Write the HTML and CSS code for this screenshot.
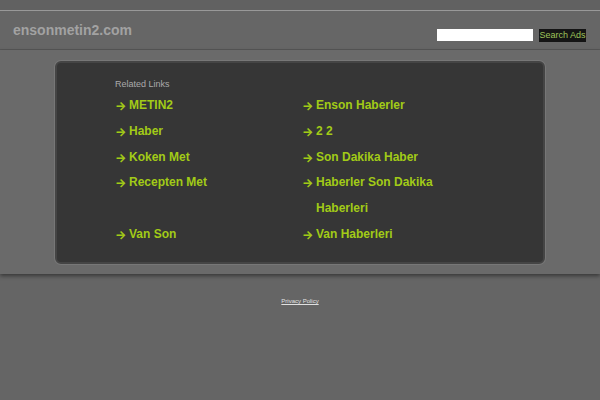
FILE: index.html
```html
<!DOCTYPE html>
<html>
<head>
<meta charset="utf-8">
<link rel="stylesheet" href="styles.css">
</head>
<body>
<div class="topbar"></div>
<div class="header">
  <div class="domain">ensonmetin2.com</div>
  <form class="search">
    <input class="search-input" type="text">
    <button class="search-btn" type="button">Search Ads</button>
  </form>
</div>
<div class="main">
  <div class="panel">
    <div class="related">Related Links</div>
    <div class="links">
      <a class="link"><span class="arrow">&#x2192;</span><span class="label">METIN2</span></a>
      <a class="link"><span class="arrow">&#x2192;</span><span class="label">Enson Haberler</span></a>
      <a class="link"><span class="arrow">&#x2192;</span><span class="label">Haber</span></a>
      <a class="link"><span class="arrow">&#x2192;</span><span class="label">2 2</span></a>
      <a class="link"><span class="arrow">&#x2192;</span><span class="label">Koken Met</span></a>
      <a class="link"><span class="arrow">&#x2192;</span><span class="label">Son Dakika Haber</span></a>
      <a class="link"><span class="arrow">&#x2192;</span><span class="label">Recepten Met</span></a>
      <a class="link"><span class="arrow">&#x2192;</span><span class="label">Haberler Son Dakika Haberleri</span></a>
      <a class="link"><span class="arrow">&#x2192;</span><span class="label">Van Son</span></a>
      <a class="link"><span class="arrow">&#x2192;</span><span class="label">Van Haberleri</span></a>
    </div>
  </div>
</div>
<div class="footer"><a class="privacy">Privacy Policy</a></div>
</body>
</html>
```
FILE: styles.css
```css
html, body {
  margin: 0;
  padding: 0;
}
body {
  background: #656565;
  font-family: "Liberation Sans", Arial, sans-serif;
  height: 400px;
  overflow: hidden;
}
.topbar {
  height: 10px;
  background: #616161;
  border-bottom: 1px solid #999999;
}
.header {
  height: 39px;
  background: #666666;
  border-bottom: 1px solid #575757;
  display: flex;
  align-items: flex-start;
  justify-content: space-between;
  box-sizing: border-box;
}
.domain {
  margin: 12px 0 0 13px;
  font-size: 14px;
  font-weight: bold;
  color: #a2a2a2;
  line-height: 15px;
}
.search {
  margin: 18px 14px 0 0;
  display: flex;
  gap: 6px;
  align-items: flex-start;
}
.search-input {
  width: 96px;
  height: 12px;
  box-sizing: border-box;
  border: none;
  padding: 0;
  margin: 0;
  background: #ffffff;
}
.search-btn {
  width: 47px;
  height: 13px;
  box-sizing: border-box;
  border: none;
  margin: 0;
  padding: 0;
  background: #141414;
  color: #9fc45a;
  font-family: "Liberation Sans", Arial, sans-serif;
  font-size: 9px;
  line-height: 13px;
  text-align: center;
}
.main {
  background: #6a6a6a;
  padding: 11px 0 10px 0;
  box-shadow: 0 2px 4px rgba(0,0,0,0.45);
  position: relative;
}
.panel {
  margin-left: 55px;
  width: 490px;
  height: 203px;
  box-sizing: border-box;
  background: #363636;
  border: 2px solid #454545;
  border-radius: 6px;
  box-shadow: 0 0 0 1px #777777;
  padding: 16px 0 0 58px;
}
.related {
  font-size: 9px;
  color: #aaaaaa;
  line-height: 11px;
}
.links {
  display: grid;
  grid-template-columns: 187px 150px;
  margin-top: 3px;
}
.link {
  display: flex;
  font-size: 12px;
  font-weight: bold;
  color: #a2cb17;
  line-height: 25.8px;
  cursor: pointer;
}
.arrow {
  width: 14px;
  flex: none;
  font-family: Inter, "DejaVu Sans", sans-serif;
  font-weight: 700;
  font-size: 12px;
}
.label {
  flex: 1;
}
.footer {
  text-align: center;
  padding-top: 15px;
}
.privacy {
  font-size: 6px;
  color: #e0e0e0;
  text-decoration: underline;
}
```
